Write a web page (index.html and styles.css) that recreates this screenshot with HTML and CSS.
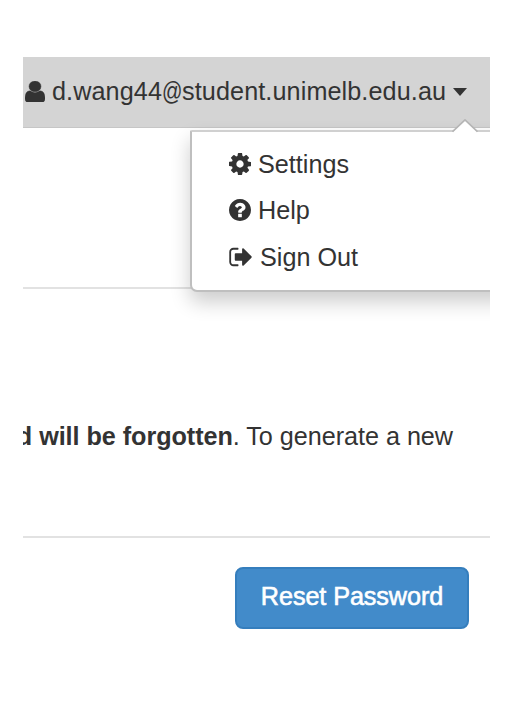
FILE: index.html
```html
<!DOCTYPE html>
<html lang="en">
<head>
<meta charset="utf-8">
<title>Account</title>
<link rel="stylesheet" href="styles.css">
</head>
<body>
<main class="page">
  <header class="navbar">
    <svg class="user-icon" viewBox="256 128 1280 1536" preserveAspectRatio="none"><path d="M1536 1399q0 109-62.5 187t-150.5 78h-854q-88 0-150.5-78t-62.5-187q0-85 8.5-160.5t31.5-152 58.5-131 94-89 134.5-34.5q131 128 313 128t313-128q76 0 134.5 34.5t94 89 58.5 131 31.5 152 8.5 160.5zm-256-887q0 159-112.5 271.5t-271.5 112.5-271.5-112.5-112.5-271.5 112.5-271.5 271.5-112.5 271.5 112.5 112.5 271.5z"/></svg>
    <span class="email">d.wang44<span class="at">@</span>student.unimelb.edu.au</span>
    <span class="caret"></span>
    <nav class="menu">
      <svg class="pointer" viewBox="0 0 26 14"><path class="pointer-fill" d="M0 14 13 1 26 14z"/><path class="pointer-line" d="M.5 12.7 13 .9 25.5 12.7"/></svg>
      <a class="item"><svg class="icon" viewBox="128 128 1536 1536"><path d="M1152 896q0-106-75-181t-181-75-181 75-75 181 75 181 181 75 181-75 75-181zm512-109v222q0 12-8 23t-20 13l-185 28q-19 54-39 91 35 50 107 138 10 12 10 25t-9 23q-27 37-99 108t-94 71q-12 0-26-9l-138-108q-44 23-91 38-16 136-29 186-7 28-36 28h-222q-14 0-24.5-8.5t-11.5-21.5l-28-184q-49-16-90-37l-141 107q-10 9-25 9-14 0-25-11-126-114-165-168-7-10-7-23 0-12 8-23 15-21 51-66.5t54-70.5q-27-50-41-99l-183-27q-13-2-21-12.5t-8-23.5v-222q0-12 8-23t19-13l186-28q14-46 39-92-40-57-107-138-10-12-10-24 0-10 9-23 26-36 98.5-107.5t94.5-71.5q13 0 26 10l138 107q44-23 91-38 16-136 29-186 7-28 36-28h222q14 0 24.5 8.5t11.5 21.5l28 184q49 16 90 37l142-107q9-9 24-9 13 0 25 10 129 119 165 170 7 8 7 22 0 12-8 23-15 21-51 66.5t-54 70.5q26 50 41 98l183 28q13 2 21 12.5t8 23.5z"/></svg><span>Settings</span></a>
      <a class="item"><svg class="icon" viewBox="128 128 1536 1536"><path d="M1024 1376v-192q0-14-9-23t-23-9h-192q-14 0-23 9t-9 23v192q0 14 9 23t23 9h192q14 0 23-9t9-23zm256-672q0-88-55.5-163t-138.5-116-170-41q-243 0-371 213-15 24 8 42l132 100q7 6 19 6 16 0 25-12 53-68 86-92 34-24 86-24 48 0 85.5 26t37.5 59q0 38-20 61t-68 45q-63 28-115.5 86.5t-52.5 125.5v36q0 14 9 23t23 9h192q14 0 23-9t9-23q0-19 21.5-49.5t54.5-49.5q32-18 49-28.5t46-35 44.5-48 28-60.5 12.5-81zm384 192q0 209-103 385.5t-279.5 279.5-385.5 103-385.5-103-279.5-279.5-103-385.5 103-385.5 279.5-279.5 385.5-103 385.5 103 279.5 279.5 103 385.5z"/></svg><span>Help</span></a>
      <a class="item sign-out"><svg class="icon" viewBox="64 128 1568 1536"><path d="M704 1440q0 4 1 20t.5 26.5-3 23.5-10 19.5-20.5 6.5h-320q-119 0-203.5-84.5t-84.5-203.5v-704q0-119 84.5-203.5t203.5-84.5h320q13 0 22.5 9.5t9.5 22.5q0 4 1 20t.5 26.5-3 23.5-10 19.5-20.5 6.5h-320q-66 0-113 47t-47 113v704q0 66 47 113t113 47h312l11.5 1 11.5 3 8 5.5 7 9 2 13.5zm928-544q0 26-19 45l-544 544q-19 19-45 19t-45-19-19-45v-288h-448q-26 0-45-19t-19-45v-384q0-26 19-45t45-19h448v-288q0-26 19-45t45-19 45 19l544 544q19 19 19 45z"/></svg><span>Sign Out</span></a>
    </nav>
  </header>
  <hr class="rule rule-top">
  <p class="notice"><span><b>d will be forgotten</b>. To generate a new</span></p>
  <hr class="rule">
  <footer class="actions"><button class="reset">Reset Password</button></footer>
</main>
</body>
</html>
```
FILE: styles.css
```css
* { box-sizing: border-box; }
body {
  margin: 0;
  height: 718px;
  padding: 57px 30px 0 23px;
  background: #fff;
  color: #333;
  font: 25.2px/46.3px "Liberation Sans", Arial, sans-serif;
}
.page { width: 467px; height: 630px; overflow: hidden; }
.navbar {
  position: relative;
  display: flex;
  align-items: center;
  height: 71px;
  padding: 0 0 1px 2px;
  background: #d4d4d4;
  border-bottom: 1.5px solid #c6c6c6;
}
.user-icon { width: 20px; height: 21.5px; margin-right: 7px; fill: #333; stroke: #333; stroke-width: 30; flex: none; }
.email { width: 394px; white-space: nowrap; letter-spacing: .1px; }
.at { display: inline-block; width: 20px; transform: scaleX(.8); transform-origin: 0 50%; letter-spacing: 0; }
.caret {
  margin-left: 7px;
  border: 7.5px solid transparent;
  border-top: 8px solid #333;
  border-bottom: 0;
}
.menu {
  position: absolute;
  left: 167px;
  top: 73px;
  width: 330px;
  height: 162px;
  padding: 9px 0 0 37px;
  background: #fff;
  border: 2px solid #bfbfbf;
  border-top-color: #d0d0d0;
  border-radius: 2px 2px 7px 7px;
  box-shadow: 0 10px 20px rgba(0, 0, 0, .2);
}
.pointer { position: absolute; left: 260px; top: -13px; width: 26px; height: 14px; }
.pointer-fill { fill: #fff; }
.pointer-line { fill: none; stroke: #b5b5b5; stroke-width: 1.7; }
.item { display: flex; align-items: center; height: 46.3px; }
.icon { width: 22px; height: 22px; margin-right: 7px; fill: #333; }
.sign-out .icon { width: 23px; margin-right: 8px; }
.rule { height: 2px; margin: 0; border: 0; background: #e2e2e2; }
.rule-top { margin-top: 159px; }
.notice {
  display: flex;
  justify-content: flex-end;
  margin: 0;
  padding: 124px 37px 77px 0;
  white-space: nowrap;
}
.notice span { letter-spacing: -.03px; }
.notice b { letter-spacing: -.05px; }
.actions { display: flex; justify-content: flex-end; padding: 28.5px 21px 0 0; }
.reset {
  width: 234px;
  height: 62px;
  padding: 0 0 3px;
  background: #428bca;
  border: 2px solid #357ebd;
  border-radius: 8px;
  color: #fff;
  font: inherit;
  letter-spacing: -.08px;
  -webkit-text-stroke: .6px #fff;
  white-space: nowrap;
}
```
